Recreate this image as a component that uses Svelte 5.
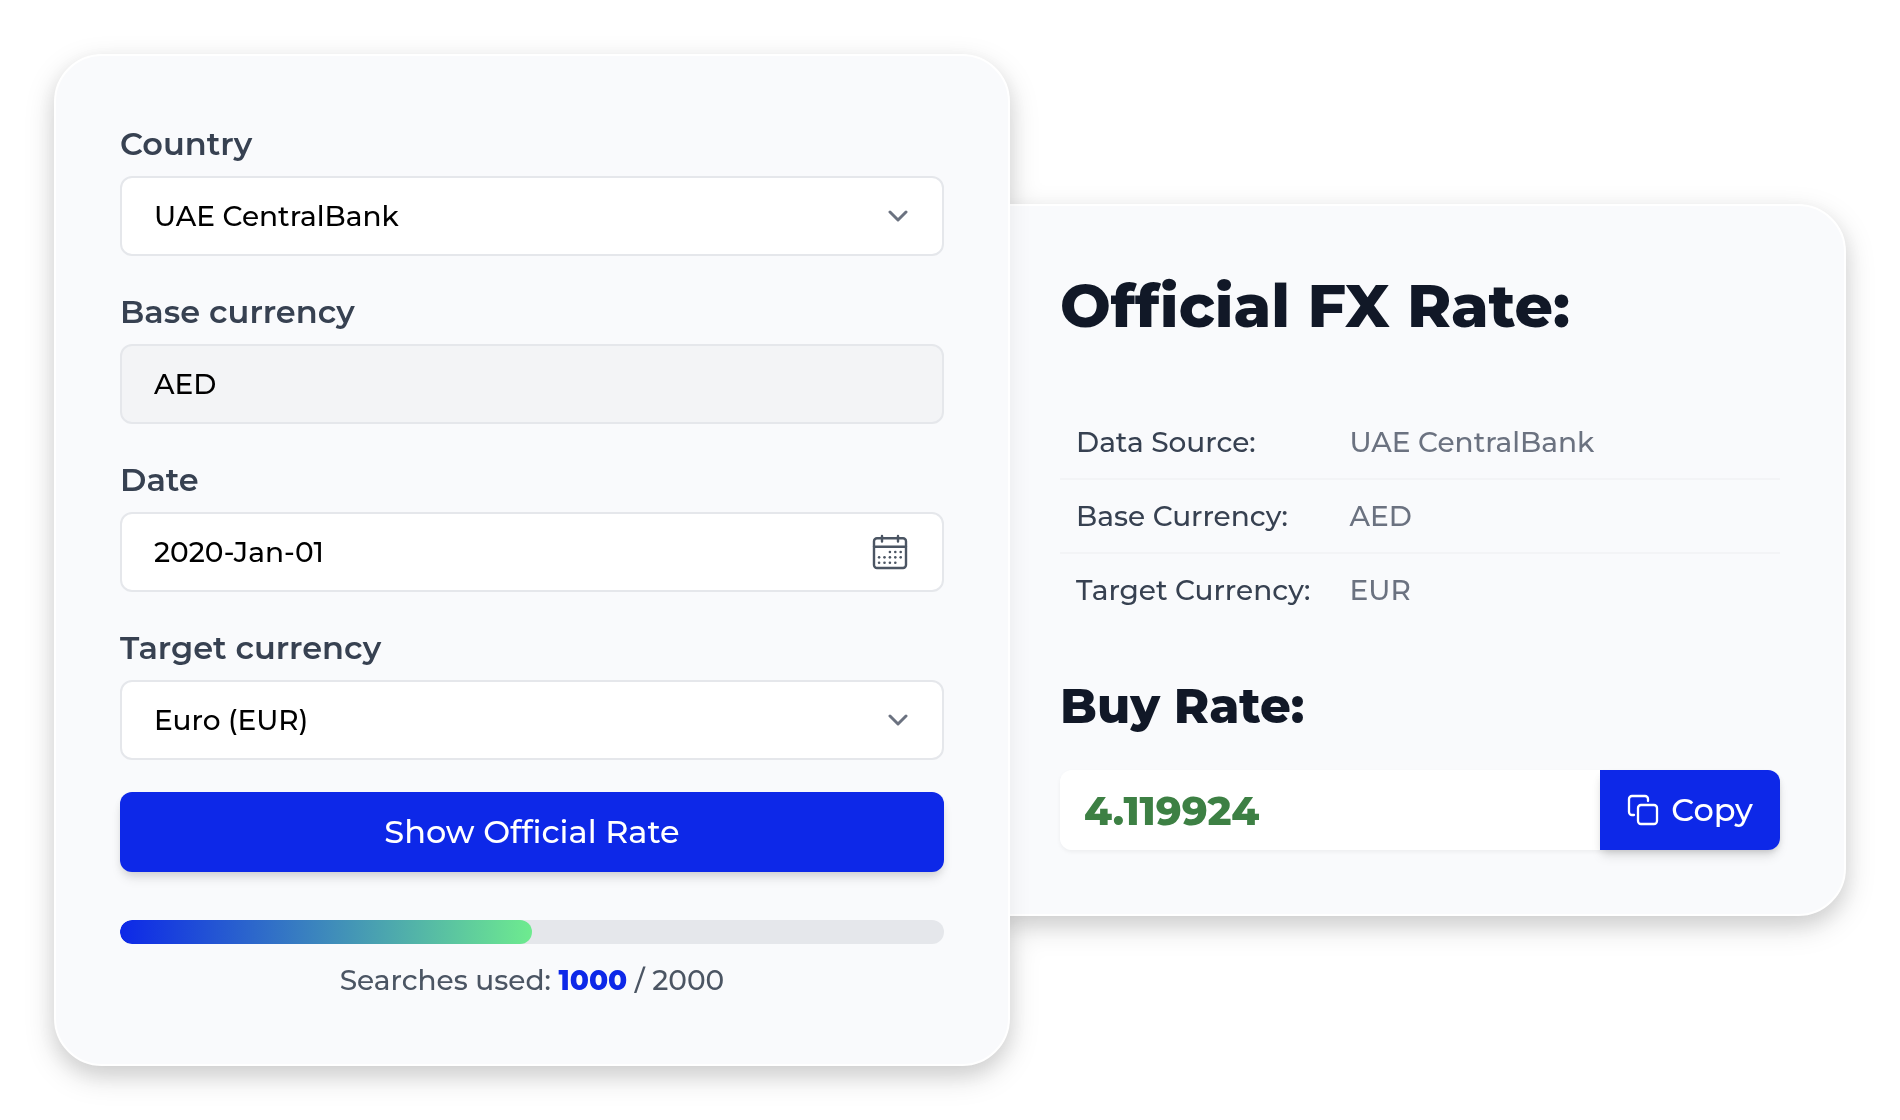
<script>
  // Form state
  let country = 'UAE CentralBank';
  let baseCurrency = 'AED';
  let date = '2020-Jan-01';
  let target = 'EUR';

  const countries = ['UAE CentralBank'];
  const currencies = [{ code: 'EUR', name: 'Euro' }];

  // Usage
  let used = 1000;
  let limit = 2000;

  // Result
  let rate = '4.119924';

  // Dots of the calendar icon, [column, row]
  const dots = [
    [2, 0], [3, 0], [4, 0],
    [0, 1], [1, 1], [2, 1], [3, 1], [4, 1],
    [0, 2], [1, 2], [2, 2], [3, 2]
  ];

  $: usedPercent = (used / limit) * 100;
  $: details = [
    { label: 'Data Source:', value: country },
    { label: 'Base Currency:', value: baseCurrency },
    { label: 'Target Currency:', value: target }
  ];

  function copyRate() {
    navigator.clipboard?.writeText(rate);
  }
</script>

<main class="converter">
  <form class="card search" on:submit|preventDefault>
    <div class="field">
      <label for="country">Country</label>
      <div class="control">
        <select id="country" bind:value={country}>
          {#each countries as item}
            <option value={item}>{item}</option>
          {/each}
        </select>
        <svg class="chevron" viewBox="0 0 20 12" aria-hidden="true">
          <path d="M2 2l8 8 8-8" />
        </svg>
      </div>
    </div>

    <div class="field">
      <label for="base">Base currency</label>
      <div class="control">
        <input id="base" type="text" class="locked" value={baseCurrency} readonly />
      </div>
    </div>

    <div class="field">
      <label for="date">Date</label>
      <div class="control">
        <input id="date" type="text" bind:value={date} />
        <button type="button" class="calendar" aria-label="Open calendar">
          <svg viewBox="0 0 36 36" aria-hidden="true">
            <rect x="2" y="4.300" width="32" height="29.700" rx="3" />
            <path d="M2 12.700h32M10 2v5.500M26 2v5.500" />
            {#each dots as [col, row]}
              <circle cx={7.1 + col * 5.4} cy={18 + row * 5.35} r="1.3" />
            {/each}
          </svg>
        </button>
      </div>
    </div>

    <div class="field">
      <label for="target">Target currency</label>
      <div class="control">
        <select id="target" bind:value={target}>
          {#each currencies as item}
            <option value={item.code}>{item.name} ({item.code})</option>
          {/each}
        </select>
        <svg class="chevron" viewBox="0 0 20 12" aria-hidden="true">
          <path d="M2 2l8 8 8-8" />
        </svg>
      </div>
    </div>

    <button type="submit" class="submit">Show Official Rate</button>

    <div class="usage">
      <div class="bar">
        <div class="bar-fill" style="width: {usedPercent}%"></div>
      </div>
      <p>Searches used: <strong>{used}</strong> / {limit}</p>
    </div>
  </form>

  <section class="card result">
    <h1>Official FX Rate:</h1>

    <table>
      <tbody>
        {#each details as row}
          <tr>
            <th scope="row">{row.label}</th>
            <td>{row.value}</td>
          </tr>
        {/each}
      </tbody>
    </table>

    <h2>Buy Rate:</h2>
    <div class="rate">
      <input type="text" aria-label="Buy rate" value={rate} readonly />
      <button type="button" on:click={copyRate}>
        <svg viewBox="0 0 32 32" aria-hidden="true">
          <path d="M21 7V5a3 3 0 0 0-3-3H5a3 3 0 0 0-3 3v13a3 3 0 0 0 3 3h2" />
          <rect x="11" y="11" width="19" height="19" rx="3" />
        </svg>
        Copy
      </button>
    </div>
  </section>
</main>

<style>
  :global(body) {
    background: #fff;
  }

  .converter {
    display: grid;
    grid-template-columns: minmax(0, 956fr) minmax(0, 836fr);
    align-items: center;
    padding: 54px;
    font-family: Montserrat, Inter, "Open Sans", sans-serif;
    font-size: 28px;
    font-weight: 500;
    line-height: 40px;
    color: #374151;
    filter: drop-shadow(0 10px 14px rgba(0, 0, 0, 0.16));
  }

  .card {
    box-sizing: border-box;
    padding: 64px;
    background: #f9fafc;
    border: 2px solid #fff;
    border-radius: 48px;
    box-shadow: 0 8px 24px rgba(0, 0, 0, 0.07);
  }

  .search {
    position: relative;
    z-index: 1;
  }

  /* slides under the search card */
  .result {
    margin-left: -48px;
    padding-left: 96px;
  }

  .field {
    margin-bottom: 32px;
  }

  label {
    display: block;
    margin-bottom: 8px;
    font-size: 32px;
    font-weight: 600;
    line-height: 48px;
  }

  .control {
    position: relative;
  }

  input,
  select,
  button {
    box-sizing: border-box;
    height: 80px;
    margin: 0;
    font: inherit;
  }

  .control input,
  .control select {
    display: block;
    width: 100%;
    padding: 0 96px 0 32px;
    color: #000;
    background: #fff;
    border: 2px solid #e5e7eb;
    border-radius: 12px;
    appearance: none;
  }

  .control .locked {
    background: #f3f4f6;
  }

  .chevron {
    position: absolute;
    top: 34px;
    right: 36px;
    width: 20px;
    height: 12px;
    pointer-events: none;
  }

  svg {
    display: block;
    fill: none;
    stroke: #6b7280;
    stroke-width: 3;
    stroke-linecap: round;
    stroke-linejoin: round;
  }

  .calendar {
    position: absolute;
    top: 0;
    right: 36px;
    padding: 0;
    background: none;
    border: 0;
    cursor: pointer;
  }

  .calendar svg {
    width: 36px;
    height: 36px;
    stroke: #4b5563;
    stroke-width: 2.4;
  }

  .calendar circle {
    fill: #4b5563;
    stroke: none;
  }

  .submit,
  .rate button {
    color: #fff;
    font-size: 32px;
    background: #0d28e8;
    border: 0;
    box-shadow: 0 8px 12px -2px rgba(0, 0, 0, 0.1), 0 4px 8px -2px rgba(0, 0, 0, 0.1);
    cursor: pointer;
  }

  .submit {
    width: 100%;
    border-radius: 12px;
  }

  .usage {
    margin-top: 48px;
    color: #4b5563;
    text-align: center;
  }

  .usage p {
    margin: 16px 0 0;
  }

  .usage strong {
    color: #0d28e8;
    font-weight: 800;
  }

  .bar {
    height: 24px;
    background: #e5e7eb;
    border-radius: 12px;
    overflow: hidden;
  }

  .bar-fill {
    height: 100%;
    background: linear-gradient(to right, #0d28e8, #6eeb8f);
    border-radius: 12px;
  }

  h1,
  h2 {
    margin: 0;
    color: #111827;
    font-weight: 800;
  }

  h1 {
    font-size: 60px;
    line-height: 72px;
  }

  h2 {
    margin: 48px 0 32px;
    font-size: 48px;
    line-height: 64px;
  }

  table {
    width: 100%;
    margin-top: 64px;
    border-collapse: separate;
    border-spacing: 0;
  }

  th,
  td {
    padding: 16px;
    text-align: left;
    white-space: nowrap;
  }

  th {
    width: 38%;
    box-sizing: border-box;
    font-weight: 500;
  }

  td {
    color: #6b7280;
  }

  tr:not(:last-child) > * {
    border-bottom: 2px solid #f3f4f6;
  }

  .rate {
    display: flex;
    border-radius: 12px;
    box-shadow: 0 2px 4px rgba(0, 0, 0, 0.05);
  }

  .rate input {
    flex: 1;
    min-width: 0;
    padding: 0 24px;
    color: #3d8044;
    font-size: 40px;
    font-weight: 800;
    background: #fff;
    border: 0;
    border-radius: 12px 0 0 12px;
  }

  .rate button {
    display: flex;
    align-items: center;
    gap: 12px;
    padding: 0 27px;
    border-radius: 0 12px 12px 0;
  }

  .rate svg {
    width: 32px;
    height: 32px;
    stroke: #fff;
    stroke-width: 2.3;
  }
</style>
